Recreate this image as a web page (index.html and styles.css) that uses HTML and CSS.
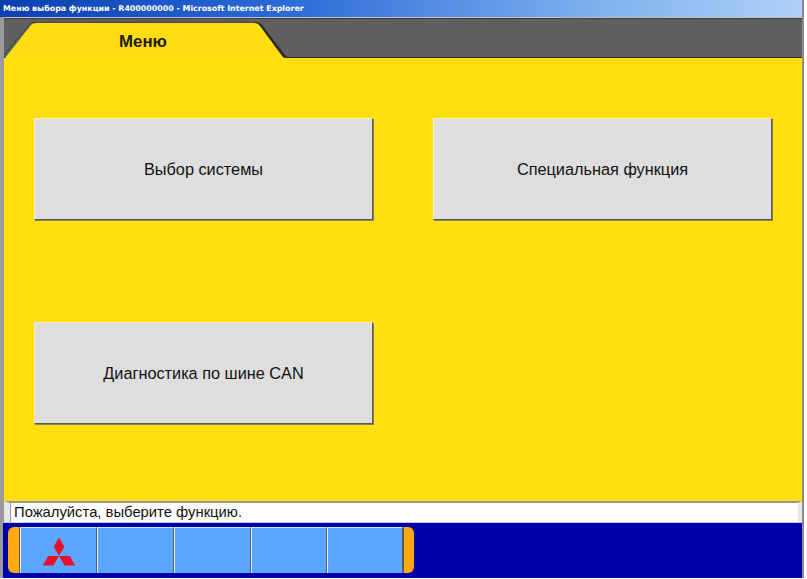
FILE: index.html
```html
<!DOCTYPE html>
<html lang="ru">
<head>
<meta charset="utf-8">
<title>Меню выбора функции</title>
<link rel="stylesheet" href="styles.css">
</head>
<body>
<div class="window">
  <header class="titlebar"><span class="title-text">Меню выбора функции - R400000000 - Microsoft Internet Explorer</span></header>
  <div class="frame">
    <nav class="tabstrip">
      <div class="tab">
        <svg class="tab-shape" width="290" height="40" viewBox="0 0 290 40">
          <path d="M0 37 L26 6 Q28 4 32 4 L252 4" fill="none" stroke="#45443c" stroke-width="1"/>
          <path d="M250 4 L253 4 Q256 4 258 7 L281 37 Q282 39 286 39 L286 40 L280 40 Z" fill="#2e2b26"/>
          <path d="M1 40 L27 7 Q29 5 33 5 L251 5 Q254 5 256 8 L278 38 Q279 40 282 40 Z" fill="#ffdd10"/>
        </svg>
        <span class="tab-label">Меню</span>
      </div>
    </nav>
    <main class="content">
      <button class="menu-btn">Выбор системы</button>
      <button class="menu-btn">Специальная функция</button>
      <button class="menu-btn">Диагностика по шине CAN</button>
    </main>
    <div class="status"><span class="status-text">Пожалуйста, выберите функцию.</span></div>
    <footer class="dock">
      <div class="toolbar">
        <div class="cap cap-left"></div>
        <div class="cell cell-logo">
          <svg width="34" height="29" viewBox="0 0 34 29">
            <path d="M17 0.5 L22.3 9.7 L17 18.8 L11.7 9.7 Z" fill="#e8102c"/>
            <path d="M17.2 19 L27.8 19 L33.2 28.4 L22.5 28.4 Z" fill="#e8102c"/>
            <path d="M16.8 19 L6.2 19 L0.8 28.4 L11.5 28.4 Z" fill="#e8102c"/>
          </svg>
        </div>
        <div class="cell cell-2"></div>
        <div class="cell cell-3"></div>
        <div class="cell cell-4"></div>
        <div class="cell cell-5"></div>
        <div class="cap cap-right"></div>
      </div>
    </footer>
  </div>
</div>
</body>
</html>
```
FILE: styles.css
```css
* { box-sizing: border-box; }
html, body { margin: 0; padding: 0; background: #fff; }
body { width: 807px; height: 579px; overflow: hidden; font-family: "Liberation Sans", Arial, sans-serif; }
.window { width: 804px; height: 578px; display: flex; flex-direction: column; border-right: 2px solid #8c8c8c; }
.titlebar { height: 17px; flex: none; background: linear-gradient(90deg, #0a3fb0 0%, #2a6ad8 35%, #7fb2ee 75%, #aed0f6 100%); display: flex; align-items: center; padding-left: 3px; }
.title-text { font-family: "DejaVu Sans", sans-serif; font-size: 7.9px; font-weight: bold; color: #fff; white-space: nowrap; }
.frame { flex: 1; display: flex; flex-direction: column; border-left: 4px solid #9a9a9a; min-height: 0; }
.tabstrip { height: 41px; flex: none; background: #5f5f5f; border-top: 1px solid #c4c4c4; border-bottom: 1px solid #2e2b26; box-shadow: inset 0 1px 0 #3c3c3c; }
.tab { position: relative; width: 285px; height: 39px; }
.tab-shape { position: absolute; left: 0; top: 0; }
.tab-label { position: absolute; left: 0; top: 15px; width: 278px; text-align: center; font-size: 16.8px; font-weight: bold; color: #201a00; line-height: 18px; }
.content { flex: 1; background: #ffdf0f; padding: 60px 0 0 30px; display: grid; grid-template-columns: 339px 339px; grid-auto-rows: 102px; column-gap: 60px; row-gap: 102px; align-content: start; }
.menu-btn { margin: 0; padding: 1px 0 0; font-family: "Liberation Sans", Arial, sans-serif; font-size: 16.3px; color: #111; background: #dedede; border: 1px solid; border-color: #f2eed0 #5a5a4a #5a5a4a #f2eed0; border-radius: 0; box-shadow: 1px 1px 0 #8a8250; }
.status { height: 21px; flex: none; background: #fff; border-top: 2px solid #999; border-left: 6px solid #e8e8e8; border-right: 4px solid #e8e8e8; display: flex; align-items: center; }
.status-text { font-size: 14.8px; color: #111; border-left: 1px solid #999; padding-left: 3px; line-height: 19px; }
.dock { flex: none; height: 56px; margin-left: -1px; background: #0000aa; border-top: 1px solid #c0c8e8; padding: 4px 0 0 5px; }
.toolbar { display: flex; width: 406px; height: 46px; }
.cap { flex: none; background: #ffa811; }
.cap-left { width: 12px; border-radius: 6px 0 0 6px; border-right: 1px solid #6b5a20; }
.cap-right { width: 11px; border-radius: 0 6px 6px 0; border-left: 1px solid #6b5a20; }
.cell { background: #5ca6ff; border-top: 1px solid #cfe2ff; border-left: 1px solid #e8eef8; border-right: 1px solid #555f78; display: flex; align-items: center; justify-content: center; }
.cell-logo { width: 77px; padding-top: 2px; }
.cell-2 { width: 77px; }
.cell-3 { width: 77px; }
.cell-4 { width: 76px; }
.cell-5 { width: 76px; }
```
